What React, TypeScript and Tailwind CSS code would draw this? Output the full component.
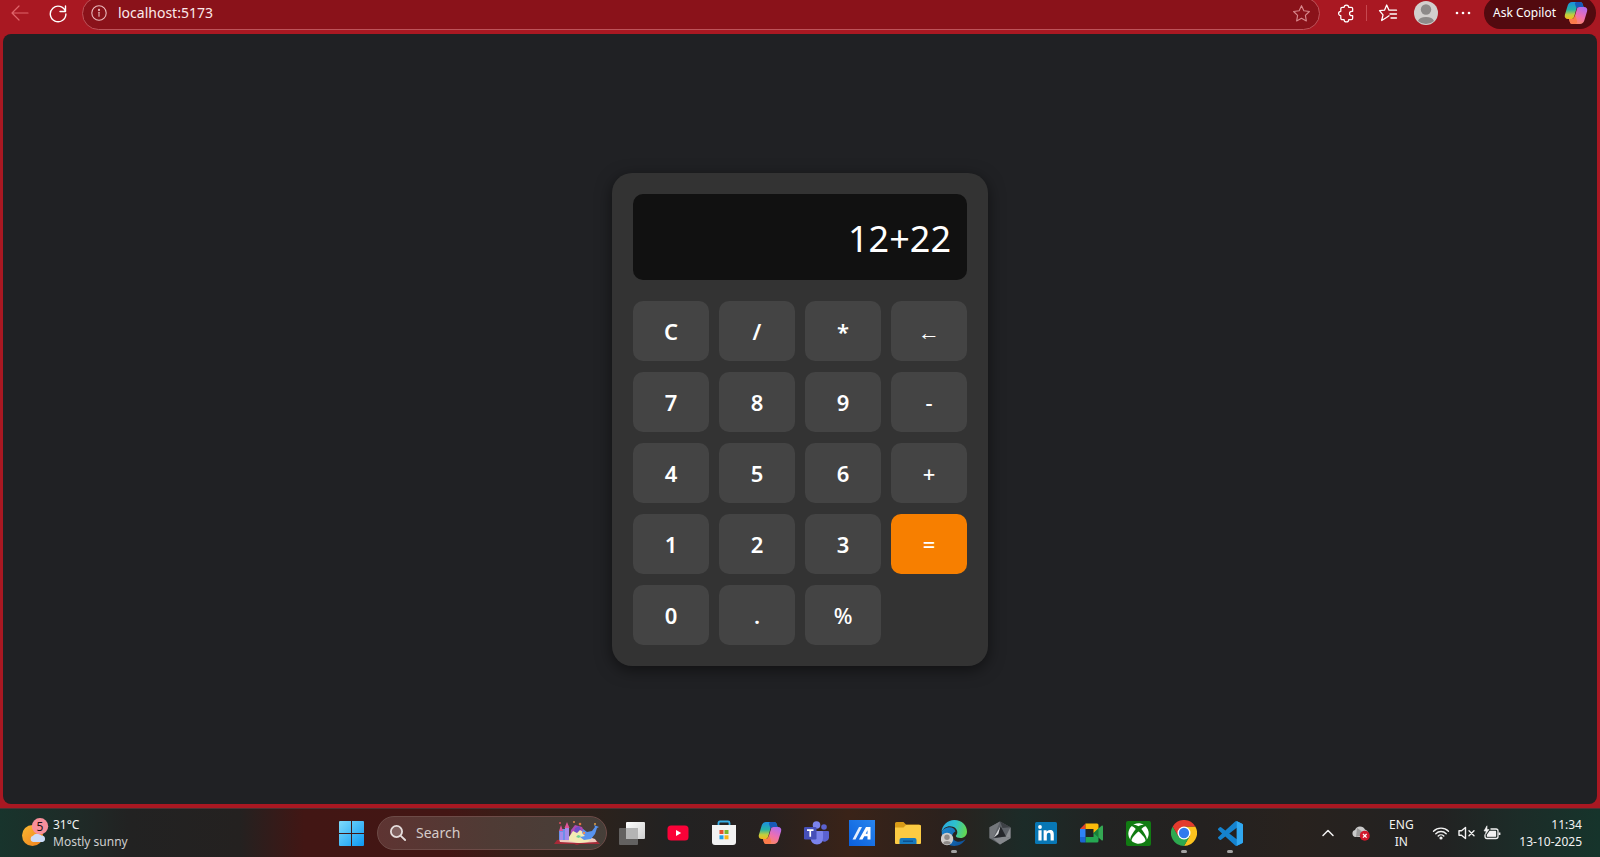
import { useState, type ReactNode } from "react";
import { FaXbox } from "react-icons/fa";

const KEYS = ["C", "/", "*", "←", "7", "8", "9", "-", "4", "5", "6", "+", "1", "2", "3", "=", "0", ".", "%"];
const LIGHT_KEYS = ["←", "-", "+", "=", "%"];

function evaluate(source: string): string {
  const tokens = source.match(/\d+\.?\d*|\.\d+|[-+*/%]/g) ?? [];
  const values: number[] = [];
  let operator = "+";
  for (const token of tokens) {
    if (/^[-+*/%]$/.test(token)) {
      operator = token;
      continue;
    }
    const n = Number(token);
    if (operator === "+") values.push(n);
    else if (operator === "-") values.push(-n);
    else {
      const last = values.pop() ?? 0;
      values.push(operator === "*" ? last * n : operator === "/" ? last / n : last % n);
    }
  }
  return String(values.reduce((sum, n) => sum + n, 0));
}

function Calculator() {
  const [expression, setExpression] = useState("12+22");

  const press = (key: string) => {
    if (key === "C") setExpression("");
    else if (key === "←") setExpression((e) => e.slice(0, -1));
    else if (key === "=") setExpression((e) => evaluate(e));
    else setExpression((e) => e + key);
  };

  return (
    <section
      aria-label="Calculator"
      className="flex w-[376px] flex-col gap-[21px] rounded-[20px] bg-[#333333] p-[21px] shadow-[0_4px_16px_rgba(0,0,0,0.5)]"
    >
      <output className="flex h-[86px] items-center justify-end rounded-[10px] bg-[#111111] px-4 pt-1 text-[36px] leading-none text-white">
        {expression}
      </output>
      <div className="grid grid-cols-4 gap-x-[10px] gap-y-[11px]">
        {KEYS.map((key) => (
          <button
            key={key}
            type="button"
            onClick={() => press(key)}
            className={`flex h-[60px] items-center justify-center rounded-[10px] text-[22px] leading-none text-white ${
              key === "=" ? "bg-[#f77f00]" : "bg-[#444444]"
            } ${LIGHT_KEYS.includes(key) ? "font-medium" : "font-semibold"}`}
          >
            {key}
          </button>
        ))}
      </div>
    </section>
  );
}

function CopilotLogo({ id, className }: { id: string; className: string }) {
  return (
    <svg viewBox="0 0 24 24" className={className} aria-hidden="true">
      <defs>
        <linearGradient id={`${id}-a`} x1="0.3" y1="0" x2="0.3" y2="1">
          <stop offset="0" stopColor="#1b8fe0" />
          <stop offset="0.45" stopColor="#27b3a5" />
          <stop offset="0.75" stopColor="#c3cf3c" />
          <stop offset="1" stopColor="#f3b71f" />
        </linearGradient>
        <linearGradient id={`${id}-b`} x1="0.8" y1="0" x2="0.3" y2="1">
          <stop offset="0" stopColor="#b06cf0" />
          <stop offset="0.5" stopColor="#ee6fb0" />
          <stop offset="1" stopColor="#fb8a5a" />
        </linearGradient>
      </defs>
      <path d="M8 1h8c1.500 0 2.300.8 2.700 2.200L19.600 6H15c-1.500 0-2.300.8-2.800 2.400l-2 7C9.600 17.500 8.800 18 7 18H4C1.500 18 .2 16.200.9 13.700L3.700 4.500C4.500 2.200 5.800 1 8 1Z" fill={`url(#${id}-a)`} />
      <path d="M12.500 1H16c1.500 0 2.300.8 2.700 2.200L19.600 6H15c-1.300 0-2 .6-2.500 1.800L11 3c-.3-1 .3-2 1.500-2Z" fill="#1859b8" />
      <path d="M16 23H8.500c-1.500 0-2.300-.8-2.700-2.200L5 18h2.500c1.800 0 2.700-.8 3.200-2.600l2.100-7C13.300 6.700 14 6 15.500 6H20c2.500 0 3.800 1.800 3.100 4.300l-2.800 9.200C19.600 21.800 18.200 23 16 23Z" fill={`url(#${id}-b)`} />
      <path d="M5 18h2.500c1.800 0 2.700-.8 3.200-2.600l.5-1.600 1.800 6.200c.4 1.600-.5 3-2 3H8.500c-1.500 0-2.300-.8-2.700-2.200Z" fill="#fb7b4a" />
    </svg>
  );
}

function IconButton({ label, className, children }: { label: string; className: string; children: ReactNode }) {
  return (
    <button type="button" aria-label={label} className={`flex shrink-0 items-center justify-center ${className}`}>
      {children}
    </button>
  );
}

function BrowserBar() {
  return (
    <header className="h-[34px] overflow-hidden">
      <div className="flex h-[26px] items-center text-white">
        <IconButton label="Back" className="w-10 text-[#e0656b]">
          <svg viewBox="0 0 20 20" className="size-5" fill="none" stroke="currentColor" strokeWidth="1.200" strokeLinecap="round" strokeLinejoin="round">
            <path d="M18 10H2M9 3l-7 7 7 7" />
          </svg>
        </IconButton>
        <IconButton label="Refresh" className="w-[35px]">
          <svg viewBox="0 0 20 20" className="size-5" fill="none" stroke="currentColor" strokeWidth="1.400" strokeLinecap="round" strokeLinejoin="round">
            <path d="M17.500 8.500A7.800 7.800 0 1 0 17.900 11M17.500 3v5.500H12" />
          </svg>
        </IconButton>
        <div className="ml-[7px] flex h-[33px] flex-1 items-center rounded-full border border-[#bd5259] bg-[#8a121a] pl-2 pr-2">
          <svg viewBox="0 0 16 16" className="size-4 text-[#eab9bc]" fill="none" stroke="currentColor" strokeWidth="1.100" strokeLinecap="round" aria-hidden="true">
            <circle cx="8" cy="8" r="7.200" />
            <path d="M8 7.300v4" />
            <circle cx="8" cy="4.900" r="0.500" fill="currentColor" />
          </svg>
          <input
            aria-label="Address"
            defaultValue="localhost:5173"
            className="ml-[11px] min-w-0 flex-1 bg-transparent text-[14px] leading-5 text-[#fbe9ea] outline-none"
          />
          <IconButton label="Add to favorites" className="w-5 text-[#d8878c]">
            <svg viewBox="0 0 20 20" className="size-[19px]" fill="none" stroke="currentColor" strokeWidth="1.200" strokeLinejoin="round">
              <path d="m10 1.800 2.500 5.300 5.800.8-4.200 4.100 1 5.800L10 15l-5.100 2.800 1-5.800L1.700 7.900l5.800-.8Z" />
            </svg>
          </IconButton>
        </div>
        <IconButton label="Extensions" className="ml-4 w-5">
          <svg viewBox="0 0 20 20" className="size-[19px]" fill="none" stroke="currentColor" strokeWidth="1.300" strokeLinejoin="round">
            <path d="M5.500 3.500h2a2.400 2.400 0 0 1 4.800 0h2.700q1.500 0 1.500 1.500v2.700h-1a2.300 2.300 0 0 0 0 4.600h1V15q0 1.500-1.500 1.500h-2.700a2.400 2.400 0 0 1-4.800 0h-2Q4 16.500 4 15v-2.700a2.300 2.300 0 0 1 0-4.600V5q0-1.500 1.500-1.500Z" />
          </svg>
        </IconButton>
        <span className="ml-[10px] h-4 w-px bg-[#c74850]" />
        <IconButton label="Favorites" className="ml-[11px] w-5">
          <svg viewBox="0 0 20 20" className="size-5" fill="none" stroke="currentColor" strokeWidth="1.300" strokeLinecap="round" strokeLinejoin="round">
            <path d="M11 12.800 8.500 14.500l-4.800 3 1.300-5.700L1.500 7.700l5-.5L8.700 2l2.300 5.200h7.500M12 11h6.500M13 15h5.500" />
          </svg>
        </IconButton>
        <IconButton label="Profile" className="ml-4 w-6">
          <svg viewBox="0 0 24 24" className="size-6">
            <circle cx="12" cy="12" r="12" fill="#d2cfcd" />
            <circle cx="12" cy="8.500" r="5.200" fill="#8d8a89" />
            <path d="M4 20a8.200 5 0 0 1 16 0 12 12 0 0 1-16 0Z" fill="#8d8a89" />
          </svg>
        </IconButton>
        <IconButton label="Settings and more" className="ml-[15px] w-5">
          <svg viewBox="0 0 20 20" className="size-5" fill="currentColor">
            <circle cx="4" cy="10" r="1.300" />
            <circle cx="10" cy="10" r="1.300" />
            <circle cx="16" cy="10" r="1.300" />
          </svg>
        </IconButton>
        <button type="button" className="ml-[11px] mr-1 flex h-8 shrink-0 items-center gap-2 rounded-full bg-[#520a0f] pl-[9px] pr-2 text-[12px]">
          Ask Copilot
          <CopilotLogo id="bar-copilot" className="size-6" />
        </button>
      </div>
    </header>
  );
}

function StartIcon() {
  return (
    <svg viewBox="0 0 25 25" className="size-[25px]">
      <defs>
        <linearGradient id="start" x1="0" y1="0" x2="1" y2="1">
          <stop offset="0" stopColor="#7fdcfb" />
          <stop offset="1" stopColor="#0c97f2" />
        </linearGradient>
      </defs>
      <path d="M1 0h11v12H0V1q0-1 1-1Zm12 0h11q1 0 1 1v11H13ZM0 13h12v12H1q-1 0-1-1Zm13 0h12v11q0 1-1 1H13Z" fill="url(#start)" />
    </svg>
  );
}

function CastleBookIcon() {
  return (
    <svg viewBox="0 0 46 24" className="h-6 w-[46px]" aria-hidden="true">
      <path d="M3 19 20 17l3 2 4-2 15 2 4 4H26l-3 1-3-1H0Z" fill="#a52a38" />
      <path d="m5 18 8-3 10 3 9-3 9 3 2 3-19 1-18-1Z" fill="#efc9bc" />
      <path d="M5 10h3V8h3v2h4v9H5Z" fill="#6d8ee8" />
      <path d="M11 6h4v13h-4Zm-5 5h3v8H6Z" fill="#a58bea" />
      <path d="m13 1 2.500 6h-5ZM7 4l2 6H5Z" fill="#e0549a" />
      <path d="m17 9 4-5 7 2 3 6-7 4-8 2Z" fill="#b04bb3" />
      <path d="m21 7 4-2 3 6-4 3-4-3Z" fill="#6f4fc8" />
      <path d="m15 16 4-6 4 2 3-3 5 3 5 3 1 3-3 3-9 1-10-2Z" fill="#f4eab4" />
      <path d="m29 8 4 3 5-1 3-4-1-2 5 2-2 1-2 6-4 5-7 1-4-3 5-1-3-3Z" fill="#5793ee" />
      <path d="m24 14 3 1-2 2-3-1Z" fill="#6fcf94" />
      <circle cx="6" cy="2" r="1" fill="#d94c5c" />
      <circle cx="20" cy="1" r="1" fill="#e28548" />
      <circle cx="26" cy="3" r="1.300" fill="#df7444" />
      <circle cx="41" cy="3" r="1" fill="#e1a243" />
      <circle cx="30" cy="12" r="1.200" fill="#f18c56" />
    </svg>
  );
}

function TaskViewIcon() {
  return (
    <svg viewBox="0 0 26 24" className="h-6 w-[26px]">
      <defs>
        <linearGradient id="pane" x1="0" y1="0" x2="1" y2="1">
          <stop offset="0" stopColor="#ffffff" />
          <stop offset="1" stopColor="#cfcfcf" />
        </linearGradient>
      </defs>
      <rect x="7" y="1" width="19" height="17" rx="1" fill="url(#pane)" />
      <rect x="0" y="7" width="19" height="17" rx="1" fill="#777777" fillOpacity="0.75" />
      <path d="M7 7h12v11H7Z" fill="#b4b4b4" />
    </svg>
  );
}

function YouTubeIcon() {
  return (
    <svg viewBox="0 0 22 16" className="h-4 w-[22px]">
      <rect width="21" height="15" x="0.500" y="0.500" rx="3.500" fill="#fb0238" />
      <path d="m9 5 5.200 3L9 11Z" fill="#ffffff" />
    </svg>
  );
}

function StoreIcon() {
  return (
    <svg viewBox="0 0 26 26" className="size-[26px]">
      <path d="M7.500 5.500V3q0-1.500 1.500-1.500h8q1.500 0 1.500 1.500v2.500" fill="none" stroke="#37aee6" strokeWidth="1.800" />
      <path d="M1 5h24v17q0 3-3 3H4q-3 0-3-3Z" fill="#f2f2f2" />
      <path d="M8.500 10h4v4h-4Z" fill="#e8502c" />
      <path d="M13.500 10h4v4h-4Z" fill="#7cb62b" />
      <path d="M8.500 15.300h4v4h-4Z" fill="#1fa0e8" />
      <path d="M13.500 15.300h4v4h-4Z" fill="#f8b616" />
    </svg>
  );
}

function TeamsIcon() {
  return (
    <svg viewBox="0 0 26 24" className="h-6 w-[26px]">
      <circle cx="21" cy="6" r="2.800" fill="#5b62d0" />
      <circle cx="13.500" cy="4" r="3.800" fill="#7b83eb" />
      <path d="M18 10h7q1 0 1 1v6a4.500 4.500 0 0 1-8 2Z" fill="#5b62d0" />
      <path d="M8 10h11q1 0 1 1v6q0 6-6 6.500-6-.5-6.500-6.500Z" fill="#7b83eb" />
      <rect x="1" y="6" width="12.500" height="12.500" rx="1.300" fill="#4650b8" />
      <path d="M4 9.200h6.500M7.250 9.200v6.500" stroke="#ffffff" strokeWidth="1.700" />
    </svg>
  );
}

function AsusIcon() {
  return (
    <svg viewBox="0 0 26 26" className="size-[26px]">
      <defs>
        <linearGradient id="asus" x1="0" y1="1" x2="1" y2="0">
          <stop offset="0" stopColor="#0a5fdc" />
          <stop offset="1" stopColor="#2885ee" />
        </linearGradient>
      </defs>
      <rect width="26" height="26" fill="url(#asus)" />
      <path d="M3.500 19.500 10 7h3L6.500 19.500Z" fill="#e4effd" />
      <path d="M10 19.500 17 7h4.500v12.500h-3v-3.300h-3.200l-1.800 3.300Zm6.700-5.700h1.800v-3.600Z" fill="#ffffff" />
    </svg>
  );
}

function FolderIcon() {
  return (
    <svg viewBox="0 0 26 24" className="h-6 w-[26px]">
      <path d="M0 2.500Q0 1 1.500 1h7l2.500 2.500H24q1.500 0 1.500 1.500v6H0Z" fill="#d99b17" />
      <path d="M0 6.500h8.500L11 4h14q1 0 1 1v17q0 1-1 1H1q-1 0-1-1Z" fill="#fccb43" />
      <path d="M4.500 23v-4q0-2 2-2h13q2 0 2 2v4Z" fill="#1679be" />
      <path d="M8 19.500h10v1.500H8Z" fill="#0b5190" />
    </svg>
  );
}

function EdgeIcon() {
  return (
    <svg viewBox="0 0 26 26" className="size-[26px]">
      <defs>
        <linearGradient id="edge-top" x1="0" y1="0.300" x2="1" y2="0.500">
          <stop offset="0" stopColor="#2aa8e0" />
          <stop offset="0.500" stopColor="#2ec0cd" />
          <stop offset="1" stopColor="#64d84f" />
        </linearGradient>
        <linearGradient id="edge-body" x1="0" y1="0" x2="1" y2="1">
          <stop offset="0" stopColor="#1b8ad2" />
          <stop offset="1" stopColor="#0c4b94" />
        </linearGradient>
      </defs>
      <path d="M1 11C5 6 13 6 14.500 11.500 11 13 10 17 13 20c3 2.800 8 2 11.500-.8C21 25.500 13 28 6.500 24 2 21.200 0 16 1 11Z" fill="url(#edge-body)" />
      <path d="M.5 12C1 5 6.500 0 13.300 0 21 0 26 5.500 26 11.500c0 4-2.700 6.500-6.500 6.500-2.500 0-4.700-.7-4.700-2 0-.8 1.500-1.500 1.500-3.800 0-3.200-3-6-7.300-6-4 0-7 2.300-8.500 5.800Z" fill="url(#edge-top)" />
      <circle cx="6" cy="19" r="6.200" fill="#cfccca" />
      <circle cx="6" cy="17.200" r="2.700" fill="#8d8a88" />
      <path d="M2 23a4.200 3 0 0 1 8 0 6 6 0 0 1-8 0Z" fill="#8d8a88" />
    </svg>
  );
}

function HexIcon() {
  return (
    <svg viewBox="0 0 24 26" className="h-[26px] w-6">
      <path d="m12 1.500 10.500 5.700v11L12 24.500 1.500 18.200v-11Z" fill="#5e6268" />
      <path d="m12 1.500 10.500 5.700-8 .8Z" fill="#3d4045" />
      <path d="M12 1.500 1.500 7.200v11l3.500.3Z" fill="#74777b" />
      <path d="m22.500 7.200-4.700 9.300 4.700 1.700Z" fill="#8b8e92" />
      <path d="M5 18.500 12 24.500l10.500-6.300-4.700-1.700Z" fill="#85888c" />
      <path d="M12.500 6 18 16.500 5.500 18Z" fill="#25272b" />
      <path d="m12.500 6-2.200 8L5.500 18Z" fill="#d7d9db" />
    </svg>
  );
}

function LinkedInIcon() {
  return (
    <svg viewBox="0 0 22 22" className="size-[22px]">
      <rect width="22" height="22" rx="1.500" fill="#0877b5" />
      <circle cx="5" cy="5" r="1.900" fill="#ffffff" />
      <path d="M3.400 8.300h3.200v10.300H3.400ZM8.600 8.300h3v1.500c.7-1.100 1.800-1.800 3.400-1.800 3 0 3.800 2 3.800 4.700v5.900h-3.200v-5.200c0-1.500-.2-2.700-1.800-2.700-1.500 0-2 1.200-2 2.700v5.200H8.600Z" fill="#ffffff" />
    </svg>
  );
}

function MeetIcon() {
  return (
    <svg viewBox="0 0 24 20" className="h-5 w-6">
      <path d="M0 6h5.500v8H0Z" fill="#2f83f6" />
      <path d="m0 6 5.500-5.500V6Z" fill="#e6402f" />
      <path d="M5.500.5H17q1.500 0 1.500 1.500v6l-5 2V6h-8Z" fill="#fbba0a" />
      <path d="M5.500 14h8v-4l5 4v4q0 1.500-1.500 1.500H5.500Z" fill="#25a852" />
      <path d="M0 14h5.500v5.500h-4Q0 19.500 0 18Z" fill="#1a66d4" />
      <path d="m13.500 10 8-7.200q1.500-1 1.500.7v13q0 1.700-1.500.7Z" fill="#34a853" />
      <path d="M13.500 10 18.500 5.500v9Z" fill="#188038" />
    </svg>
  );
}

function XboxIcon() {
  return (
    <span className="flex size-[25px] items-center justify-center rounded-[2px] bg-[#117b12]">
      <FaXbox className="size-[21px] text-white" />
    </span>
  );
}

function ChromeIcon() {
  return (
    <svg viewBox="0 0 48 48" className="size-[26px]">
      <path d="M24 12h20.800A24 24 0 0 1 24 48l10.400-18Z" fill="#fcc31e" />
      <path d="M13.600 30 3.200 12A24 24 0 0 0 24 48l10.400-18Z" fill="#2da94f" />
      <path d="M24 12h20.800A24 24 0 0 0 3.200 12l10.400 18Z" fill="#e33b2e" />
      <circle cx="24" cy="24" r="12" fill="#ffffff" />
      <circle cx="24" cy="24" r="9.500" fill="#3079ed" />
    </svg>
  );
}

function CodeIcon() {
  return (
    <svg viewBox="0 0 24 24" className="size-[25px]">
      <path
        d="M23.150 2.587L18.210.21a1.494 1.494 0 0 0-1.705.29l-9.460 8.630-4.120-3.128a.999.999 0 0 0-1.276.057L.327 7.261A1 1 0 0 0 .326 8.740L3.899 12 .326 15.260a1 1 0 0 0 .001 1.479L1.650 17.940a.999.999 0 0 0 1.276.057l4.120-3.128 9.460 8.630a1.492 1.492 0 0 0 1.704.29l4.942-2.377A1.500 1.500 0 0 0 24 20.060V3.939a1.500 1.500 0 0 0-.85-1.352zm-5.146 14.861L10.826 12l7.178-5.448v10.896z"
        fill="#1583cf"
      />
      <path d="M18.004.15 18.210.21 23.150 2.587A1.500 1.500 0 0 1 24 3.939V20.060a1.500 1.500 0 0 1-.852 1.352L18.210 23.790 18.004 23.850Z" fill="#31a8f0" />
    </svg>
  );
}

const APPS: { name: string; icon: ReactNode; running?: boolean }[] = [
  { name: "Task view", icon: <TaskViewIcon /> },
  { name: "YouTube", icon: <YouTubeIcon /> },
  { name: "Microsoft Store", icon: <StoreIcon /> },
  { name: "Copilot", icon: <CopilotLogo id="task-copilot" className="size-6" /> },
  { name: "Teams", icon: <TeamsIcon /> },
  { name: "MyASUS", icon: <AsusIcon /> },
  { name: "File Explorer", icon: <FolderIcon /> },
  { name: "Edge", icon: <EdgeIcon />, running: true },
  { name: "Armoury Crate", icon: <HexIcon /> },
  { name: "LinkedIn", icon: <LinkedInIcon /> },
  { name: "Google Meet", icon: <MeetIcon /> },
  { name: "Xbox", icon: <XboxIcon /> },
  { name: "Chrome", icon: <ChromeIcon />, running: true },
  { name: "Visual Studio Code", icon: <CodeIcon />, running: true },
];

function Taskbar() {
  return (
    <footer className="grid h-[49px] grid-cols-[1fr_auto_1fr] items-center border-t border-[#4a3233] bg-[linear-gradient(90deg,#18342c_0%,#1f2a27_5%,#222222_8%,#242120_15%,#421614_19%,#431614_28%,#352019_33%,#2a221d_38%,#222222_42%,#272120_48%,#3a2318_53%,#2b211d_59%,#1c2b28_64%,#222322_69%,#242120_75%,#28221e_81%,#222222_90%,#1c2c28_95%,#16342b_100%)] text-[12px] leading-[17px] text-[#f2f2f2]">
      <button type="button" className="flex items-center gap-[3px] justify-self-start pl-[22px] text-left">
        <svg viewBox="0 0 28 30" className="h-[30px] w-7" aria-hidden="true">
          <defs>
            <linearGradient id="sun" x1="0" y1="0" x2="1" y2="1">
              <stop offset="0" stopColor="#fbb931" />
              <stop offset="1" stopColor="#f0801e" />
            </linearGradient>
          </defs>
          <circle cx="10.500" cy="17.500" r="10.500" fill="url(#sun)" />
          <path d="M11 24a3.200 3.200 0 0 1 0-6.200 5 4 0 0 1 8.500-.3A3.300 3.300 0 0 1 20.500 24Z" fill="#cddcf8" />
          <circle cx="18" cy="8.200" r="8.200" fill="#f98f9b" />
          <text x="18" y="12.500" textAnchor="middle" fontSize="12" fill="#1d1112">5</text>
        </svg>
        <span className="flex flex-col">
          <span>31°C</span>
          <span className="text-[#cfcfcf]">Mostly sunny</span>
        </span>
      </button>

      <nav aria-label="Taskbar" className="flex h-full items-center pr-[9px]">
        <IconButton label="Start" className="mr-[13px] w-[26px]">
          <StartIcon />
        </IconButton>
        <label className="mr-[2px] flex h-[34px] w-[230px] items-center rounded-full border border-[#6d4b47] bg-[linear-gradient(90deg,#5e3432,#4f3b35_50%,#463f39)] pl-3 pr-[6px]">
          <svg viewBox="0 0 16 16" className="size-4 shrink-0" fill="none" stroke="#e6dedd" strokeWidth="1.800" strokeLinecap="round" aria-hidden="true">
            <circle cx="6.500" cy="6.500" r="5.600" fill="#80605e" />
            <path d="m10.800 10.800 4.300 4.200" />
          </svg>
          <input
            aria-label="Search"
            placeholder="Search"
            className="ml-[10px] min-w-0 flex-1 bg-transparent text-[14px] leading-5 outline-none placeholder:text-[#d5cbc9]"
          />
          <CastleBookIcon />
        </label>
        {APPS.map((app) => (
          <IconButton key={app.name} label={app.name} className="relative h-full w-[46px]">
            {app.icon}
            {app.running && <span className="absolute bottom-1 left-5 h-[3px] w-[6px] rounded-full bg-[#a3a3a3]" />}
          </IconButton>
        ))}
      </nav>

      <div className="flex items-center justify-self-end pr-[18px]">
        <IconButton label="Show hidden icons" className="mr-3 w-6">
          <svg viewBox="0 0 14 14" className="size-[14px]" fill="none" stroke="currentColor" strokeWidth="1.500" strokeLinecap="round" strokeLinejoin="round">
            <path d="m2 9.500 5-5 5 5" />
          </svg>
        </IconButton>
        <IconButton label="OneDrive" className="mr-[17px] w-[18px]">
          <svg viewBox="0 0 18 16" className="h-4 w-[18px]">
            <path d="M3.500 12A3.600 3.600 0 0 1 3 5a5.500 5.500 0 0 1 10-.5A4 4 0 0 1 14 12Z" fill="#c9c9c9" />
            <path d="m5 3 9 6-10 3Z" fill="#9b9b9b" />
            <circle cx="12.800" cy="10.800" r="5" fill="#d0182b" />
            <path d="m11 9 3.600 3.600M14.600 9 11 12.600" stroke="#ffffff" strokeWidth="1.300" />
          </svg>
        </IconButton>
        <button type="button" className="mr-[17px] w-7 text-center">
          ENG
          <br />
          IN
        </button>
        <button type="button" aria-label="Network, volume and battery" className="mr-[18px] flex items-center gap-2">
          <svg viewBox="0 0 18 14" className="h-[14px] w-[18px]" fill="none" stroke="currentColor" strokeWidth="1.400" strokeLinecap="round">
            <path d="M1.500 5.200a10.600 10.600 0 0 1 15 0M3.800 7.700a7.300 7.300 0 0 1 10.400 0M6.200 10a4 4 0 0 1 5.600 0" />
            <circle cx="9" cy="12" r="0.900" fill="currentColor" />
          </svg>
          <svg viewBox="0 0 17 14" className="h-[14px] w-[17px]" fill="none" stroke="currentColor" strokeWidth="1.400" strokeLinecap="round" strokeLinejoin="round">
            <path d="M1 4.800h2.500L7.500 1.500v11L3.500 9.200H1ZM11 4.700l5 5M16 4.700l-5 5" />
          </svg>
          <svg viewBox="0 0 18 16" className="h-4 w-[18px]" fill="none" stroke="currentColor" strokeWidth="1.300" strokeLinejoin="round">
            <path d="M7.500 4H13q2 0 2 2v5.500q0 2-2 2H4q-2 0-2-2V9.500" />
            <path d="M7 6.500h5.500v4.700H4.500V10Z" fill="currentColor" />
            <path d="M16.500 7.500v2.500" strokeWidth="1.800" />
            <path d="M4 .8 1 6h2.200L2.400 9.500 6 4.500H4Z" fill="currentColor" strokeWidth="0.600" />
          </svg>
        </button>
        <button type="button" className="flex flex-col text-right">
          <time>11:34</time>
          <time dateTime="2025-10-13">13-10-2025</time>
        </button>
      </div>
    </footer>
  );
}

export default function App() {
  return (
    <div className="flex min-h-screen flex-col bg-[#a91822] font-['Noto_Sans','Open_Sans',sans-serif]">
      <BrowserBar />
      <main className="mx-[3px] mb-1 flex flex-1 items-center justify-center rounded-[8px] bg-[#202124]">
        <Calculator />
      </main>
      <Taskbar />
    </div>
  );
}
